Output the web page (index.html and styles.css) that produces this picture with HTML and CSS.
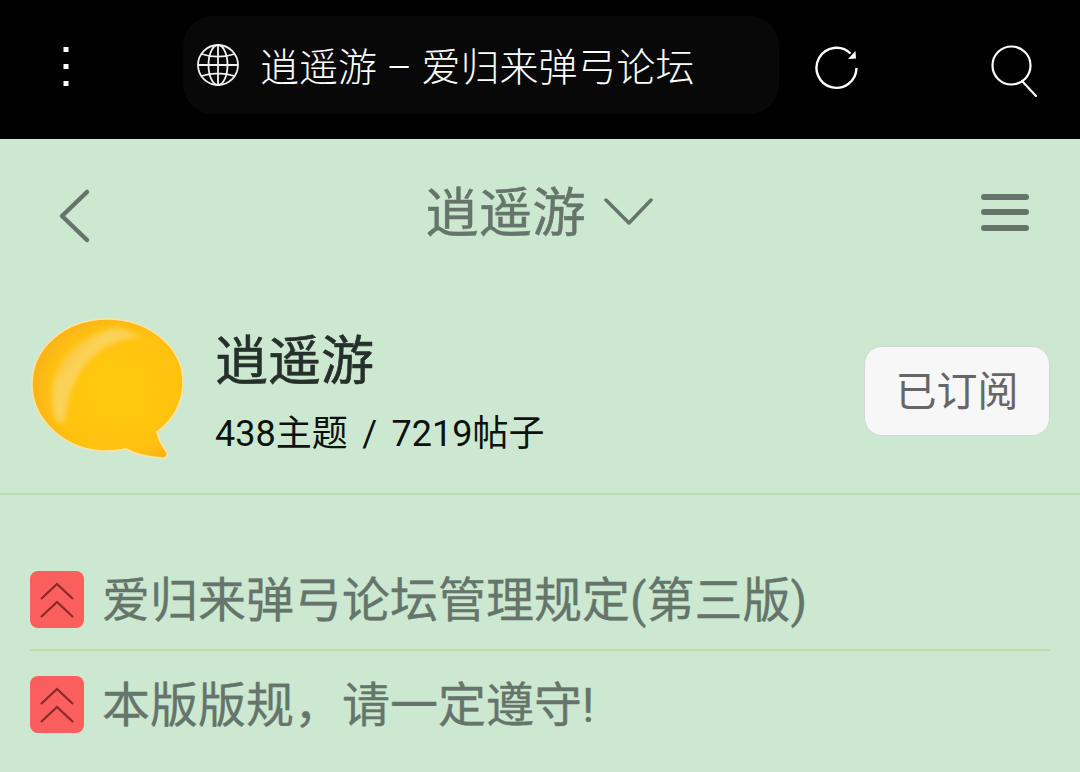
FILE: index.html
```html
<!DOCTYPE html>
<html lang="zh-CN">
<head>
<meta charset="utf-8">
<title>逍遥游</title>
<link rel="stylesheet" href="styles.css">
</head>
<body>
<header class="browser">
  <svg class="more" width="10" height="48" viewBox="0 0 10 48"><rect x="0.500" y="2" width="5" height="5" fill="#fff"/><rect x="0.500" y="19" width="5" height="5" fill="#fff"/><rect x="0.500" y="36" width="5" height="5" fill="#fff"/></svg>
  <div class="address">
    <svg class="globe" width="44" height="44" viewBox="0 0 44 44" fill="none" stroke="#f2f2f2" stroke-width="1.800"><circle cx="22" cy="22" r="20"/><ellipse cx="22" cy="22" rx="9.500" ry="20"/><path d="M22 2v40M2 22h40M5.500 11c10 3.500 23 3.500 33 0M5.500 33c10-3.500 23-3.500 33 0"/></svg>
    <span class="address-text">逍遥游<span class="dash">–</span>爱归来弹弓论坛</span>
  </div>
  <svg class="reload" width="44" height="44" viewBox="0 0 44 44" fill="none"><path d="M35.500 7.500A20 20 0 1 0 41.500 22" stroke="#fff" stroke-width="2.400"/><path d="M33 13l8-.5-.5-7.500z" fill="#fff"/></svg>
  <svg class="search" width="46" height="52" viewBox="0 0 46 52" fill="none" stroke="#fff" stroke-width="2.200"><circle cx="20.500" cy="20.500" r="19"/><path d="M31 36l14 15" stroke-linecap="round"/></svg>
</header>
<main class="page">
  <nav class="nav">
    <svg class="back" width="34" height="56" viewBox="0 0 34 56" fill="none" stroke="#65756b" stroke-width="4.500" stroke-linecap="round" stroke-linejoin="round"><path d="M29 4L4 28l25 24"/></svg>
    <div class="nav-title"><span>逍遥游</span>
      <svg width="50" height="30" viewBox="0 0 50 30" fill="none" stroke="#65756b" stroke-width="3.500" stroke-linecap="round" stroke-linejoin="round"><path d="M2 3l23 23L47 3"/></svg>
    </div>
    <div class="menu"><i></i><i></i><i></i></div>
  </nav>
  <section class="forum">
    <svg class="logo" width="156" height="144" viewBox="0 0 156 144">
      <defs>
        <radialGradient id="fill" cx="56%" cy="52%" r="60%"><stop offset="0" stop-color="#ffcb0c"/><stop offset=".72" stop-color="#ffc20f"/><stop offset="1" stop-color="#f9ae1c"/></radialGradient>
        <linearGradient id="shine" gradientUnits="userSpaceOnUse" x1="20" y1="28" x2="46" y2="50"><stop offset="0" stop-color="#fbbc2a"/><stop offset="1" stop-color="#fbd258"/></linearGradient>
        <filter id="soft" x="-20%" y="-20%" width="140%" height="140%"><feGaussianBlur stdDeviation="2.500"/></filter>
      </defs>
      <path d="M77 1c42 0 76 28 76 63 0 21-10 38-26 50 2 8 5 14 9 19 3 4 0 8-5 7-14-1-26-4-35-9-6 1-12 2-19 2C35 133 2 102 2 66 2 30 35 1 77 1z" fill="url(#fill)" stroke="#fde3a5" stroke-width="1.500"/>
      <path d="M27 104C10 62 38 18 88 10L113 19C75 20 40 45 35 104z" fill="url(#shine)" filter="url(#soft)"/>
    </svg>
    <div class="forum-info">
      <h1 class="forum-name">逍遥游</h1>
      <p class="forum-stats">438主题<span class="sep">/</span>7219帖子</p>
    </div>
    <button class="sub">已订阅</button>
  </section>
  <ul class="topics">
    <li class="topic">
      <svg class="badge" width="54" height="57" viewBox="0 0 54 57"><rect width="54" height="57" rx="8" fill="#fb5f5d"/><path d="M11 28l16-15 16 15M11 46l16-15 16 15" fill="none" stroke="#8a2a28" stroke-width="2.200"/></svg>
      <span class="topic-text">爱归来弹弓论坛管理规定(第三版)</span>
    </li>
    <li class="topic">
      <svg class="badge" width="54" height="57" viewBox="0 0 54 57"><rect width="54" height="57" rx="8" fill="#fb5f5d"/><path d="M11 28l16-15 16 15M11 46l16-15 16 15" fill="none" stroke="#8a2a28" stroke-width="2.200"/></svg>
      <span class="topic-text">本版版规，请一定遵守!</span>
    </li>
  </ul>
</main>
</body>
</html>
```

FILE: styles.css
```css
* { box-sizing: border-box; }
html, body { margin: 0; padding: 0; height: 100%; overflow: hidden; }
body {
  background: #cce8d0;
  font-family: Roboto, "Noto Sans CJK SC", sans-serif;
}
.browser {
  height: 139px;
  background: #000;
  display: flex;
  align-items: center;
  padding: 0 43px 6px 63px;
}
.more { flex: none; margin: 4px 110px 0 0; }
.address {
  width: 596px;
  height: 98px;
  margin-top: -4px;
  padding-left: 13px;
  background: #080808;
  border-radius: 30px;
  display: flex;
  align-items: center;
  gap: 20px;
  flex: none;
}
.address-text { margin-top: 4px; color: #fff; font-size: 39px; line-height: 1; font-family: "Noto Sans CJK SC", sans-serif; font-weight: 300; white-space: nowrap; }
.dash { margin: 0 9.500px; font-family: Roboto, sans-serif; }
.reload { flex: none; margin-left: 36px; margin-top: 2px; }
.search { flex: none; margin-left: auto; margin-top: 8px; }
.nav {
  height: 146px;
  display: flex;
  align-items: center;
  padding: 0 51px 0 58px;
  justify-content: space-between;
}
.nav-title {
  display: flex;
  align-items: center;
  gap: 18px;
  color: #65756b;
  font-size: 53.500px;
  line-height: 1;
  margin: 4px 0 0 6px;
  -webkit-text-stroke: 0.4px #65756b;
}
.nav-title svg { margin-top: -4px; }
.back { margin-top: 7px; }
.menu { width: 48px; display: flex; flex-direction: column; gap: 9.500px; }
.menu i { display: block; height: 6px; border-radius: 4px; background: #65756b; }
.forum {
  height: 210px;
  padding: 33px 30px 0;
  display: flex;
  align-items: flex-start;
  border-bottom: 2px solid #b8dfae;
}
.logo { flex: none; }
.forum-info { margin-left: 29px; flex: 1; }
.forum-name { margin: 12px 0 0; font-size: 53px; line-height: 64px; font-weight: 400; color: #26302a; -webkit-text-stroke: 0.6px #26302a; }
.forum-stats { margin: 18px 0 0; font-size: 36px; line-height: 44px; color: #0d120f; }
.sep { margin: 0 14.500px; }
.sub {
  margin-top: 28px;
  width: 186px;
  height: 90px;
  background: #f7f7f7;
  border: 1px solid #cfd9d1;
  border-radius: 18px;
  color: #666;
  font: 400 41px/1 "Noto Sans CJK SC", sans-serif;
  padding: 0 0 6px;
}
.topics { list-style: none; margin: 51px 30px 0 30px; padding: 0; }
.topic {
  height: 105px;
  display: flex;
  align-items: center;
  gap: 18px;
  color: #65756b;
  font-size: 48px;
  line-height: 1;
  padding-top: 2px;
}
.topic:first-child { border-bottom: 2px solid #b8dfae; padding-top: 4px; }
.topic-text { margin-top: 2px; -webkit-text-stroke: 0.3px #65756b; }
.badge { flex: none; }
```
